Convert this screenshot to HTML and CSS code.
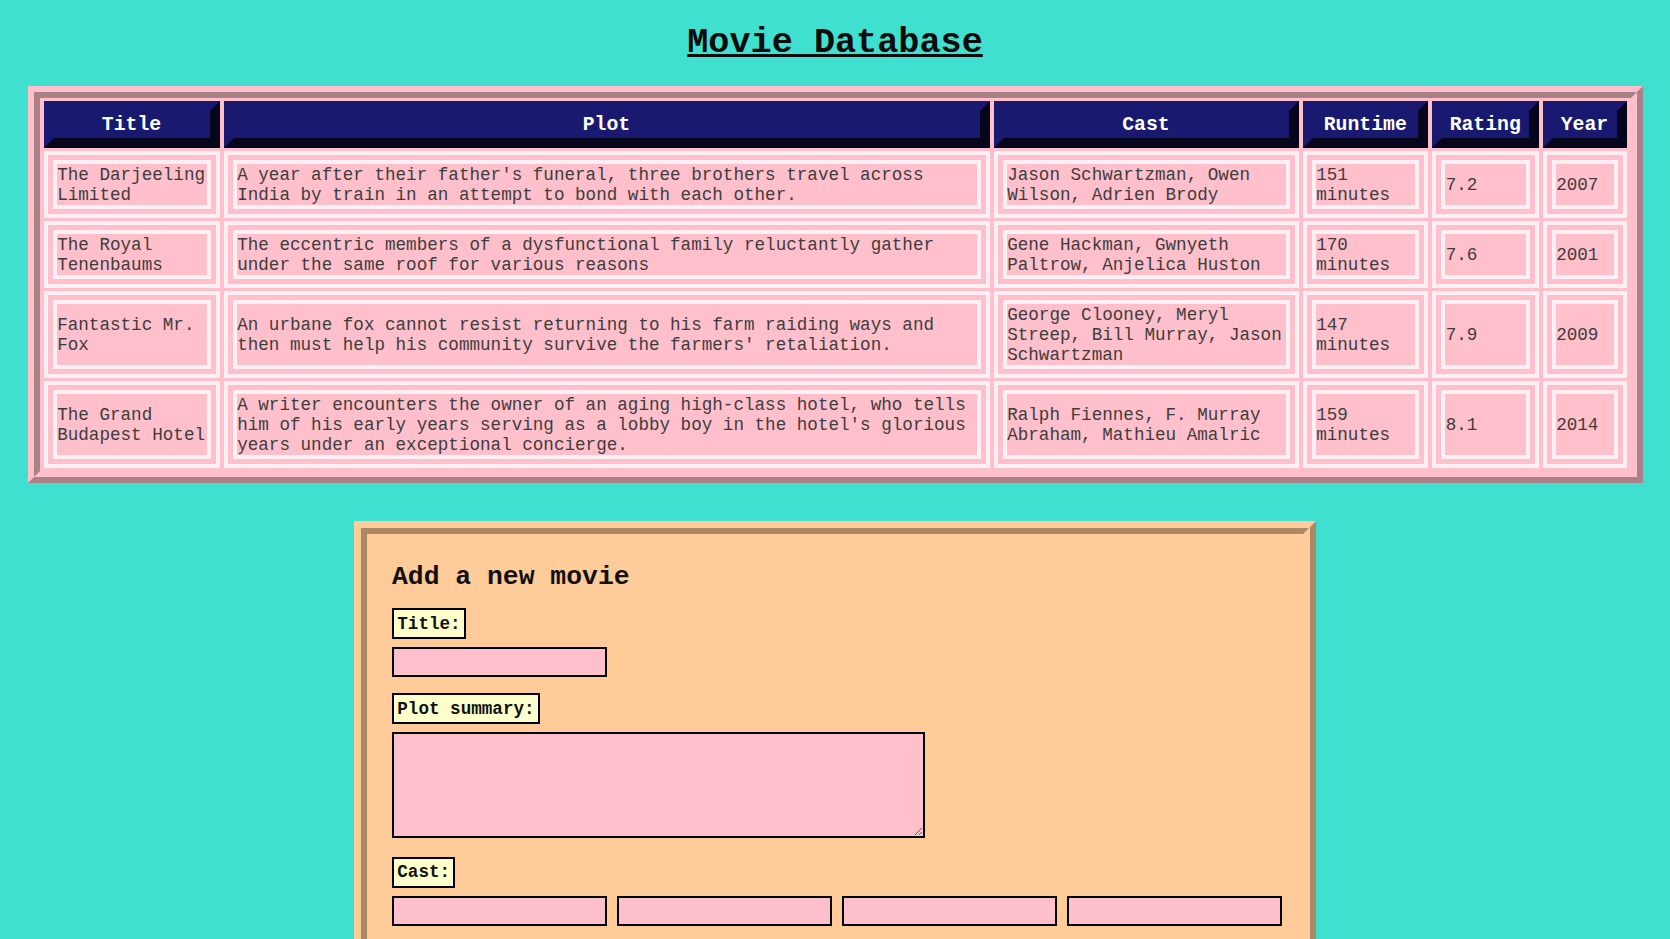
FILE: index.html
```html
<!DOCTYPE html>
<html lang="en">
<head>
<meta charset="utf-8">
<title>Movie Database</title>
<link rel="stylesheet" href="styles.css">
</head>
<body>
<h1 class="page-title">Movie Database</h1>
<table class="movies">
  <thead>
    <tr>
      <th class="c-title">Title</th>
      <th class="c-plot">Plot</th>
      <th class="c-cast">Cast</th>
      <th class="c-runtime">Runtime</th>
      <th class="c-rating">Rating</th>
      <th class="c-year">Year</th>
    </tr>
  </thead>
  <tbody>
    <tr>
      <td>The Darjeeling Limited</td>
      <td>A year after their father's funeral, three brothers travel across India by train in an attempt to bond with each other.</td>
      <td>Jason Schwartzman, Owen Wilson, Adrien Brody</td>
      <td>151 minutes</td>
      <td>7.2</td>
      <td>2007</td>
    </tr>
    <tr>
      <td>The Royal Tenenbaums</td>
      <td>The eccentric members of a dysfunctional family reluctantly gather under the same roof for various reasons</td>
      <td>Gene Hackman, Gwnyeth Paltrow, Anjelica Huston</td>
      <td>170 minutes</td>
      <td>7.6</td>
      <td>2001</td>
    </tr>
    <tr>
      <td>Fantastic Mr. Fox</td>
      <td>An urbane fox cannot resist returning to his farm raiding ways and then must help his community survive the farmers' retaliation.</td>
      <td>George Clooney, Meryl Streep, Bill Murray, Jason Schwartzman</td>
      <td>147 minutes</td>
      <td>7.9</td>
      <td>2009</td>
    </tr>
    <tr>
      <td>The Grand Budapest Hotel</td>
      <td>A writer encounters the owner of an aging high-class hotel, who tells him of his early years serving as a lobby boy in the hotel's glorious years under an exceptional concierge.</td>
      <td>Ralph Fiennes, F. Murray Abraham, Mathieu Amalric</td>
      <td>159 minutes</td>
      <td>8.1</td>
      <td>2014</td>
    </tr>
  </tbody>
</table>

<form class="add-form">
  <h2 class="form-title">Add a new movie</h2>
  <div class="field">
    <label class="tag" for="title">Title:</label>
    <input class="text-input" id="title" type="text">
  </div>
  <div class="field">
    <label class="tag" for="plot">Plot summary:</label>
    <textarea class="text-area" id="plot"></textarea>
  </div>
  <div class="field field-cast">
    <label class="tag" for="cast1">Cast:</label>
    <div class="cast-row">
      <input class="text-input" id="cast1" type="text">
      <input class="text-input" type="text">
      <input class="text-input" type="text">
      <input class="text-input" type="text">
    </div>
  </div>
</form>
</body>
</html>
```

FILE: styles.css
```css
html {
  background: #40e0d0;
}

body {
  margin: 0;
  padding: 0 8.8px;
  background: #40e0d0;
  font-family: "Liberation Mono", "Courier New", monospace;
  font-size: 17.6px;
  line-height: 20px;
  color: #3d3d3d;
}

.page-title {
  font-size: 35.2px;
  line-height: 40px;
  font-weight: bold;
  text-align: center;
  text-decoration: underline;
  margin: 0;
  padding: 23px 0 23px;
  color: #0c0c0c;
}

.movies {
  margin: 0 auto;
  border: 12.5px ridge #ffc0cb;
  background: #ffc0cb;
  border-spacing: 4.4px 3.6px;
}

.movies th,
.movies td {
  box-sizing: border-box;
}

.movies th {
  background: #191970;
  color: #ffffff;
  border: 10px solid;
  border-color: #191970 #05051c #05051c #191970;
  padding: 2.5px 1px 1px;
  font-size: 19.8px;
  line-height: 23px;
  font-weight: bold;
  text-align: center;
}

.movies td {
  border: 13px double #fff0f5;
  padding: 1.2px 0.7px 0;
  vertical-align: middle;
  text-align: left;
  color: #3d3d3d;
}

.c-title { width: 176px; }
.c-plot { width: 766px; }
.c-cast { width: 305px; }
.c-runtime { width: 125.5px; }
.c-rating { width: 106.5px; }
.c-year { width: 84px; }

.add-form {
  box-sizing: border-box;
  width: 962px;
  margin: 38px auto 0;
  border: 13px ridge #ffcc99;
  background: #ffcc99;
  padding: 28px 25px 30px;
}

.form-title {
  font-size: 26.4px;
  line-height: 30px;
  font-weight: bold;
  margin: 0 0 16px;
  color: #111;
}

.field {
  display: flex;
  flex-direction: column;
  align-items: flex-start;
  gap: 8.5px;
  margin-bottom: 16px;
}

.field-cast {
  margin-top: 19px;
}

.tag {
  display: inline-block;
  background: #ffffcc;
  border: 2.2px solid #000;
  padding: 3.3px;
  font-weight: bold;
  color: #111;
}

.text-input {
  box-sizing: border-box;
  width: 215px;
  height: 30px;
  margin: 0;
  background: #ffc0cb;
  border: 2.2px solid #000;
  border-radius: 0;
  font-family: "Liberation Mono", monospace;
}

.text-area {
  box-sizing: border-box;
  width: 533px;
  height: 105.5px;
  margin: 0;
  background: #ffc0cb;
  border: 2.2px solid #000;
  border-radius: 0;
  font-family: "Liberation Mono", monospace;
}

.cast-row {
  display: flex;
  gap: 10px;
}
```
